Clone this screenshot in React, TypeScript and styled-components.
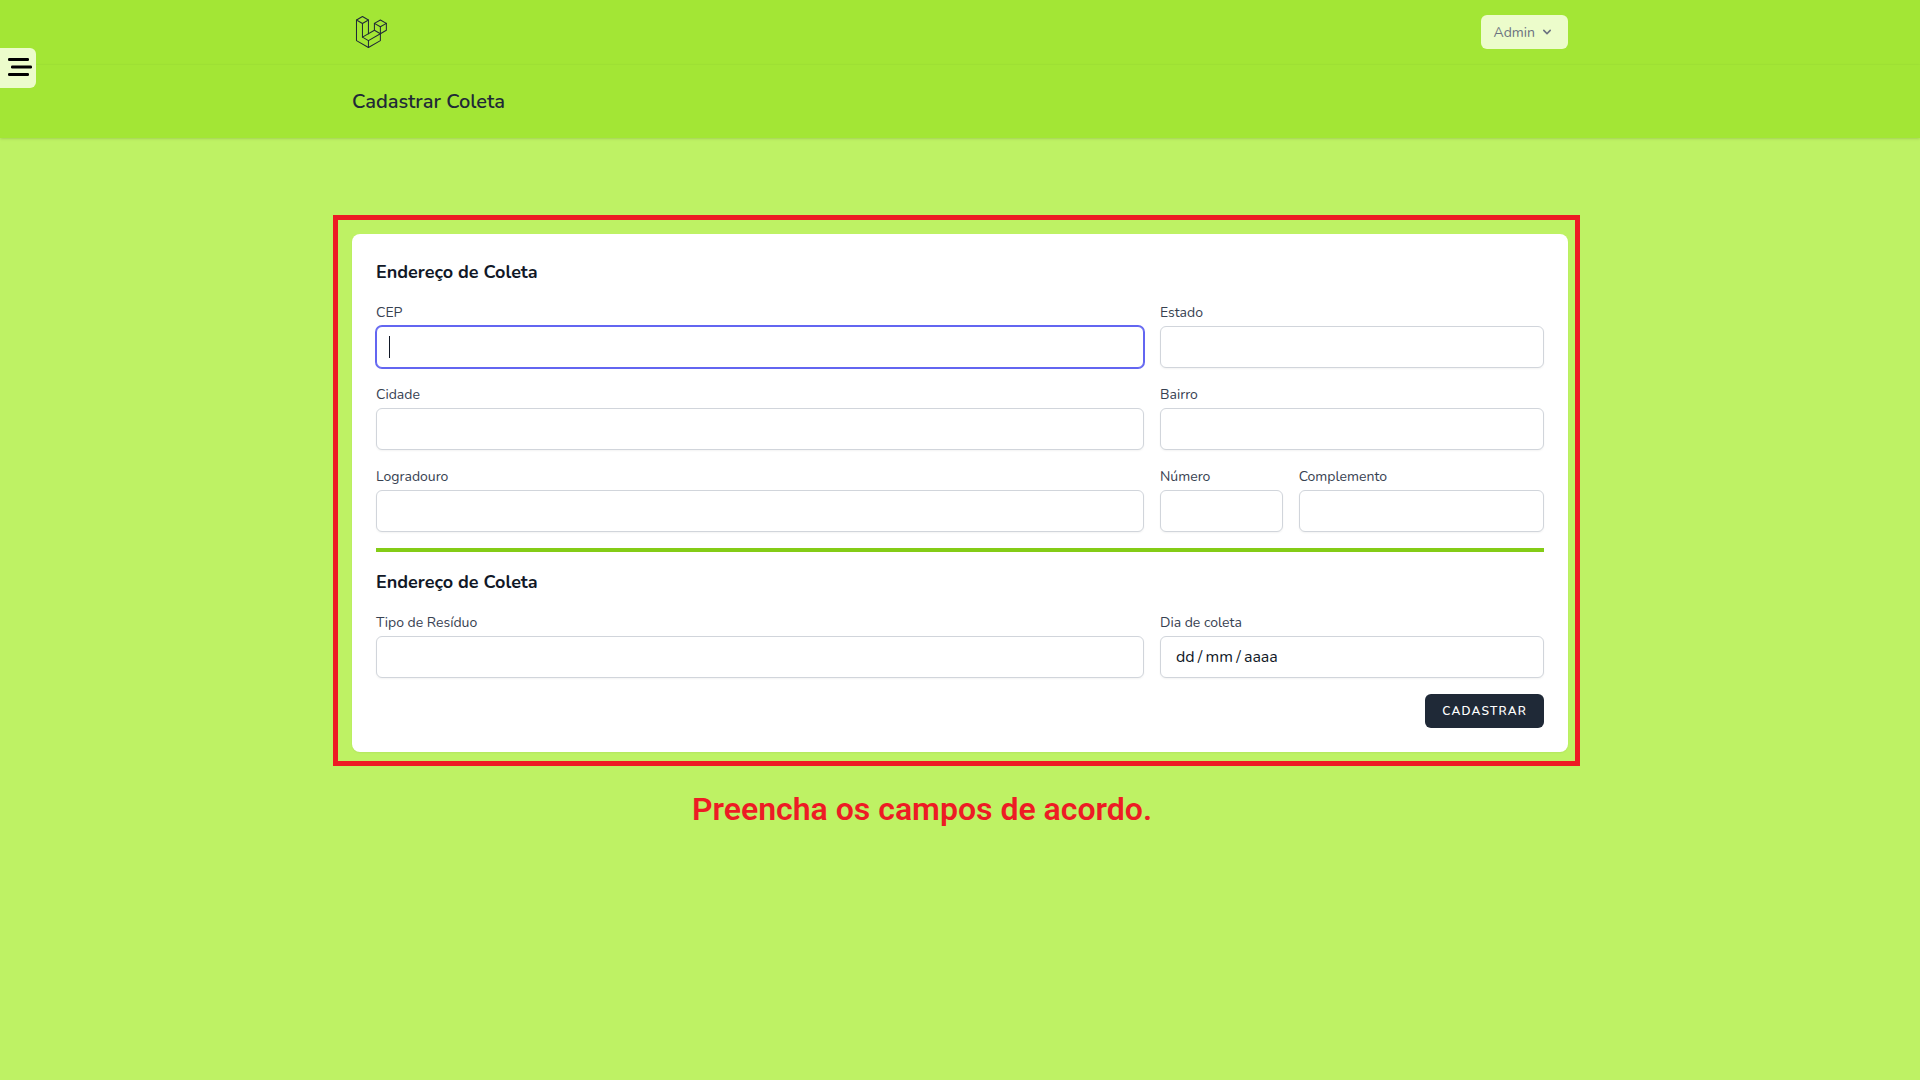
import React from "react";
import styled, { createGlobalStyle } from "styled-components";

const GlobalStyle = createGlobalStyle`
  *, *::before, *::after { box-sizing: border-box; }
  body {
    margin: 0;
    background: #bef264;
    color: #111827;
    font-family: Nunito, Lato, sans-serif;
    font-size: 16px;
    line-height: 24px;
  }
  button, input { font: inherit; color: inherit; }
  h1, h2, p { margin: 0; }
`;

const Container = styled.div`
  max-width: 1280px;
  margin: 0 auto;
  padding: 0 32px;
`;

const Nav = styled.nav`
  background: #a3e635;
  border-bottom: 1px solid #a1e435;
`;

const NavRow = styled(Container)`
  display: flex;
  align-items: center;
  justify-content: space-between;
  height: 64px;
`;

const LogoLink = styled.a`
  display: flex;
  color: #1f2937;
`;

const UserButton = styled.button`
  display: flex;
  align-items: center;
  gap: 4px;
  height: 34px;
  padding: 0 13px;
  border: 0;
  border-radius: 6px;
  background: #ecfccb;
  color: #6b7280;
  font-size: 14px;
  line-height: 17px;
  cursor: pointer;
`;

const MenuButton = styled.button`
  position: fixed;
  top: 48px;
  left: 0;
  display: flex;
  align-items: center;
  height: 40px;
  padding: 0 4px 0 8px;
  border: 0;
  border-radius: 0 6px 6px 0;
  background: #ecfccb;
  color: #000;
  cursor: pointer;
`;

const PageHeader = styled.header`
  padding: 24px 0;
  background: #a3e635;
  box-shadow: 0 1px 3px rgba(0, 0, 0, 0.1), 0 1px 2px -1px rgba(0, 0, 0, 0.1);
`;

const PageTitle = styled.h1`
  color: #1f2937;
  font-size: 20px;
  font-weight: 600;
  line-height: 25px;
`;

const Main = styled.main`
  padding: 96px 0;
`;

const Highlight = styled.div`
  position: relative;

  &::after {
    content: "";
    position: absolute;
    inset: -19px -12px -14px -19px;
    border: 5px solid #ed1c24;
    pointer-events: none;
  }
`;

const Card = styled.form`
  display: flex;
  flex-direction: column;
  gap: 16px;
  padding: 24px;
  border-radius: 8px;
  background: #fff;
  box-shadow: 0 1px 2px rgba(0, 0, 0, 0.05);
`;

const SectionTitle = styled.h2`
  font-size: 18px;
  font-weight: 700;
  line-height: 28px;
`;

const Row = styled.div<{ $columns: string }>`
  display: grid;
  grid-template-columns: ${(p) => p.$columns};
  gap: 16px;
`;

const FieldBox = styled.div`
  display: flex;
  flex-direction: column;
  gap: 2px;
  min-width: 0;
`;

const Label = styled.label`
  color: #374151;
  font-size: 14px;
  line-height: 22px;
`;

const InputWrap = styled.div`
  position: relative;
  display: flex;
`;

const Input = styled.input`
  width: 100%;
  min-width: 0;
  height: 42px;
  padding: 8px 12px;
  border: 1px solid #d1d5db;
  border-radius: 6px;
  background: #fff;
  box-shadow: 0 1px 2px rgba(0, 0, 0, 0.05);

  &::placeholder {
    color: #111827;
    opacity: 1;
  }

  &[inputmode="numeric"] {
    padding: 8px 15px;
  }

  &:focus {
    outline: none;
    border-color: #6366f1;
    box-shadow: 0 0 0 1px #6366f1;
  }

  &:focus:placeholder-shown {
    caret-color: transparent;
  }
`;

const Caret = styled.span`
  position: absolute;
  top: 10px;
  left: 13px;
  display: none;
  width: 1px;
  height: 22px;
  background: #111827;
  pointer-events: none;

  input:focus:placeholder-shown + & {
    display: block;
  }
`;

const Divider = styled.hr`
  width: 100%;
  margin: 0;
  border: 0;
  border-top: 4px solid #84cc16;
`;

const Actions = styled.div`
  display: flex;
  justify-content: flex-end;
`;

const SubmitButton = styled.button`
  height: 34px;
  padding: 0 17px;
  border: 0;
  border-radius: 6px;
  background: #1f2937;
  color: #fff;
  font-size: 12px;
  font-weight: 600;
  line-height: 16px;
  letter-spacing: 0.1em;
  text-transform: uppercase;
  cursor: pointer;
`;

const Caption = styled.p`
  margin-top: 37px;
  padding-right: 76px;
  color: #ed1c24;
  font-family: Bahnschrift, Roboto, sans-serif;
  font-size: 32px;
  font-weight: 600;
  line-height: 40px;
  text-align: center;
`;

function Logo() {
  return (
    <svg
      width="36"
      height="36"
      viewBox="0 0 316 316"
      fill="none"
      stroke="currentColor"
      strokeWidth="9"
      strokeLinejoin="round"
      strokeLinecap="round"
      aria-hidden="true"
    >
      <path d="M91.8 22.4 144.3 52.6 91.8 82.8 39.4 52.6Z" />
      <path d="M39.4 52.6V233.4L144.3 293.8 249.1 233.4V112.5" />
      <path d="M144.3 52.6V173M91.8 82.8V203.2L144.3 233.4V293.8" />
      <path d="M91.8 203.2 196.7 142.7 249.1 173 144.3 233.4" />
      <path d="M249.1 52.1 301.6 82.3 249.1 112.5 196.7 82.3Z" />
      <path d="M196.7 82.3V142.7M301.6 82.3V142.7L249.1 173" />
    </svg>
  );
}

function Chevron() {
  return (
    <svg width="16" height="16" viewBox="0 0 20 20" fill="currentColor" aria-hidden="true">
      <path
        fillRule="evenodd"
        clipRule="evenodd"
        d="M5.293 7.293a1 1 0 011.414 0L10 10.586l3.293-3.293a1 1 0 111.414 1.414l-4 4a1 1 0 01-1.414 0l-4-4a1 1 0 010-1.414z"
      />
    </svg>
  );
}

function MenuIcon() {
  return (
    <svg width="24" height="24" viewBox="0 0 24 24" fill="currentColor" aria-hidden="true">
      <rect x="0" y="2" width="21" height="3" rx="1.2" />
      <rect x="3" y="9.5" width="21" height="3" rx="1.2" />
      <rect x="0" y="17" width="21" height="3" rx="1.2" />
    </svg>
  );
}

type FieldProps = {
  id: string;
  label: string;
  placeholder?: string;
  date?: boolean;
  autoFocus?: boolean;
};

function Field({ id, label, placeholder = " ", date, autoFocus }: FieldProps) {
  return (
    <FieldBox>
      <Label htmlFor={id}>{label}</Label>
      <InputWrap>
        <Input
          id={id}
          name={id}
          type="text"
          inputMode={date ? "numeric" : undefined}
          placeholder={placeholder}
          autoFocus={autoFocus}
          autoComplete="off"
        />
        <Caret />
      </InputWrap>
    </FieldBox>
  );
}

export default function App() {
  return (
    <>
      <GlobalStyle />
      <Nav>
        <NavRow>
          <LogoLink href="#" aria-label="Início">
            <Logo />
          </LogoLink>
          <UserButton type="button">
            Admin
            <Chevron />
          </UserButton>
        </NavRow>
      </Nav>
      <MenuButton type="button" aria-label="Menu">
        <MenuIcon />
      </MenuButton>
      <PageHeader>
        <Container>
          <PageTitle>Cadastrar Coleta</PageTitle>
        </Container>
      </PageHeader>
      <Main>
        <Container>
          <Highlight>
            <Card onSubmit={(e) => e.preventDefault()}>
              <SectionTitle>Endereço de Coleta</SectionTitle>
              <Row $columns="2fr 1fr">
                <Field id="cep" label="CEP" autoFocus />
                <Field id="estado" label="Estado" />
              </Row>
              <Row $columns="2fr 1fr">
                <Field id="cidade" label="Cidade" />
                <Field id="bairro" label="Bairro" />
              </Row>
              <Row $columns="2fr 1fr">
                <Field id="logradouro" label="Logradouro" />
                <Row $columns="1fr 2fr">
                  <Field id="numero" label="Número" />
                  <Field id="complemento" label="Complemento" />
                </Row>
              </Row>
              <Divider />
              <SectionTitle>Endereço de Coleta</SectionTitle>
              <Row $columns="2fr 1fr">
                <Field id="tipo" label="Tipo de Resíduo" />
                <Field
                  id="dia"
                  label="Dia de coleta"
                  placeholder={"dd\u2009/\u2009mm\u2009/\u2009aaaa"}
                  date
                />
              </Row>
              <Actions>
                <SubmitButton type="submit">Cadastrar</SubmitButton>
              </Actions>
            </Card>
          </Highlight>
          <Caption>Preencha os campos de acordo.</Caption>
        </Container>
      </Main>
    </>
  );
}
